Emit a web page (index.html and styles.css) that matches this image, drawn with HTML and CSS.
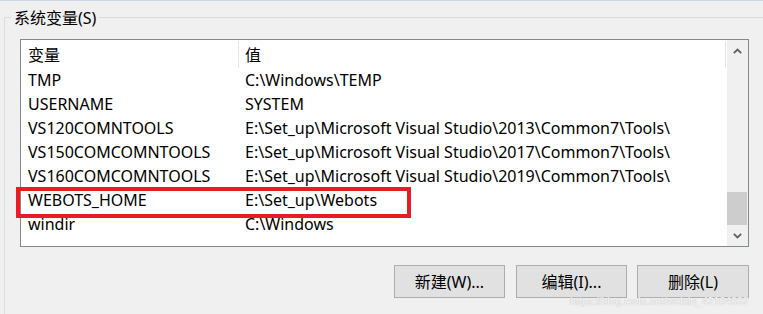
FILE: index.html
```html
<!DOCTYPE html>
<html lang="zh-CN">
<head>
<meta charset="utf-8">
<title>系统变量</title>
<link rel="stylesheet" href="styles.css">
</head>
<body>
<div class="window">
  <div class="group">
    <span class="group-label">系统变量(S)</span>
    <div class="listbox">
      <div class="list">
        <div class="list-header">
          <div class="hcell c1">变量</div>
          <div class="hcell c2">值</div>
        </div>
        <div class="row"><div class="cell c1">TMP</div><div class="cell c2">C:\Windows\TEMP</div></div>
        <div class="row"><div class="cell c1">USERNAME</div><div class="cell c2">SYSTEM</div></div>
        <div class="row"><div class="cell c1">VS120COMNTOOLS</div><div class="cell c2">E:\Set_up\Microsoft Visual Studio\2013\Common7\Tools\</div></div>
        <div class="row"><div class="cell c1">VS150COMCOMNTOOLS</div><div class="cell c2">E:\Set_up\Microsoft Visual Studio\2017\Common7\Tools\</div></div>
        <div class="row"><div class="cell c1">VS160COMCOMNTOOLS</div><div class="cell c2">E:\Set_up\Microsoft Visual Studio\2019\Common7\Tools\</div></div>
        <div class="row"><div class="cell c1">WEBOTS_HOME</div><div class="cell c2">E:\Set_up\Webots</div></div>
        <div class="row"><div class="cell c1">windir</div><div class="cell c2">C:\Windows</div></div>
      </div>
      <div class="scrollbar">
        <div class="sb-btn">
          <svg width="9" height="6" viewBox="0 0 9 6"><polyline points="0.8,5.2 4.5,1.5 8.2,5.2" fill="none" stroke="#606060" stroke-width="1.8"/></svg>
        </div>
        <div class="sb-track"><div class="sb-thumb"></div></div>
        <div class="sb-btn">
          <svg width="9" height="6" viewBox="0 0 9 6"><polyline points="0.8,0.8 4.5,4.5 8.2,0.8" fill="none" stroke="#606060" stroke-width="1.8"/></svg>
        </div>
      </div>
      <div class="highlight"></div>
    </div>
    <div class="buttons">
      <button class="btn btn-new">新建(W)...</button>
      <button class="btn btn-edit">编辑(I)...</button>
      <button class="btn btn-del">删除(L)</button>
    </div>
  </div>
  <div class="watermark">https://blog.csdn.net/weixin_42104932</div>
</div>
</body>
</html>
```
FILE: styles.css
```css
* { box-sizing: border-box; }
html, body {
  margin: 0;
  padding: 0;
  background: #f0f0f0;
}
body {
  font-family: "Noto Sans", "Noto Sans CJK SC", sans-serif;
  font-size: 16px;
  color: #000;
}
.window {
  position: relative;
  width: 763px;
  height: 314px;
  overflow: hidden;
  border-top: 1px solid #cbd5e6;
  padding: 16px 0 0 4px;
}
.group {
  position: relative;
  height: 100%;
  border-top: 1px solid #dcdcdc;
  border-left: 1px solid #dcdcdc;
  padding: 21px 0 0 15px;
}
.group-label {
  position: absolute;
  left: 6px;
  top: -12px;
  padding: 0 3px;
  background: #f0f0f0;
  line-height: 24px;
}
.listbox {
  position: relative;
  width: 729px;
  height: 208px;
  border: 1px solid #828790;
  background: #fff;
  display: flex;
}
.list {
  flex: 1;
  overflow: hidden;
}
.list-header {
  display: grid;
  grid-template-columns: 218px 1fr;
  height: 27px;
}
.hcell {
  padding-top: 2px;
  line-height: 25px;
  border-right: 1px solid #e5e5e5;
  margin-top: 1px;
}
.hcell.c2 { margin-right: 1px; }
.row {
  display: grid;
  grid-template-columns: 218px 1fr;
  height: 24px;
  line-height: 24px;
}
.c1 { padding-left: 7px; }
.c2 { padding-left: 6px; }
.cell { white-space: nowrap; padding-top: 1px; }
.scrollbar {
  width: 21px;
  display: flex;
  flex-direction: column;
  background: #f0f0f0;
}
.sb-btn {
  height: 21px;
  display: flex;
  align-items: center;
  justify-content: center;
}
.sb-track {
  flex: 1;
  display: flex;
  flex-direction: column;
  justify-content: flex-end;
}
.sb-thumb {
  height: 33px;
  margin: 0 1px 0 0;
  background: #cdcdcd;
}
.highlight {
  position: absolute;
  left: -5px;
  top: 147px;
  width: 395px;
  height: 31px;
  border: 4px solid #e81c24;
}
.buttons {
  width: 729px;
  margin-top: 18px;
  display: flex;
  justify-content: flex-end;
}
.btn {
  height: 33px;
  width: 111px;
  border: 1px solid #adadad;
  background: #e1e1e1;
  font-family: "Noto Sans", "Noto Sans CJK SC", sans-serif;
  font-size: 16px;
  line-height: 20px;
  color: #000;
  padding: 0;
}
.btn-edit { margin-left: 11px; }
.btn-del { margin-left: 10px; width: 112px; }
.watermark {
  position: absolute;
  left: 570px;
  top: 294px;
  font-family: "Liberation Sans", sans-serif;
  font-size: 10.5px;
  line-height: 13px;
  color: rgba(255, 255, 255, 0.85);
  text-shadow: 0 0 1px #c4c4c4, 0 0 1px #c4c4c4;
  white-space: nowrap;
}
```
